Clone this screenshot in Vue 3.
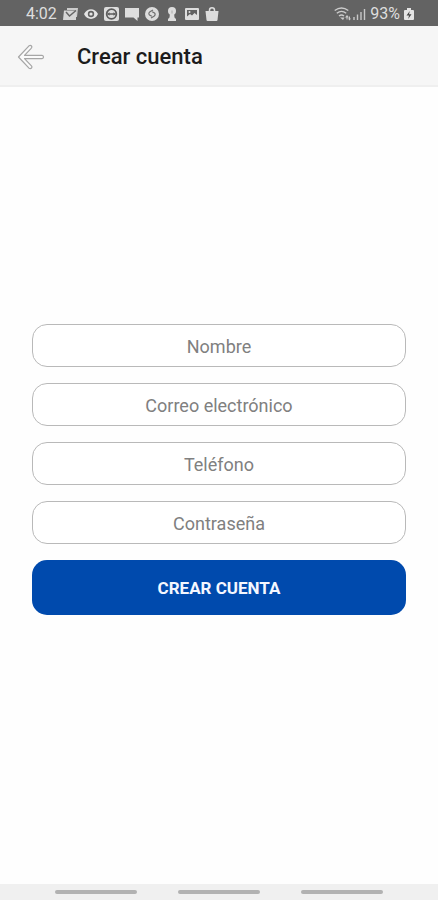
<template>
  <div class="screen">
    <!-- barra de estado -->
    <div class="status-bar">
      <span class="time">4:02</span>
      <div class="status-icons">
        <svg width="15" height="14" viewBox="0 0 15 14">
          <path d="M4 1h11l-1 9h-1V3H4z" fill="#ccc" />
          <path d="M1 3.500h12V13H0z" fill="#d6d6d6" />
          <path d="M3 5l3.500 4L13 3.500" fill="none" stroke="#666" stroke-width="1.500" />
        </svg>
        <svg width="14" height="14" viewBox="0 0 14 14">
          <path d="M0 7C3 0.500 11 0.500 14 7C11 13.500 3 13.500 0 7z" fill="#e4e4e4" />
          <circle cx="7" cy="7" r="3.200" fill="#626262" />
          <circle cx="7" cy="7" r="1.600" fill="#e4e4e4" />
        </svg>
        <svg width="15" height="14" viewBox="0 0 15 14">
          <rect x="0" y="0" width="15" height="14" rx="2" fill="#ddd" />
          <circle cx="7.500" cy="7" r="4.800" fill="none" stroke="#5c5c5c" stroke-width="1.800" />
          <path d="M3 7l2.500-1.800v1h4v-1L12 7 9.500 8.800v-1h-4v1z" fill="#5c5c5c" />
        </svg>
        <svg width="14" height="14" viewBox="0 0 14 14">
          <path d="M0 1h14v9.500h-1.500V14L8.500 10.500H0z" fill="#ddd" />
        </svg>
        <svg width="14" height="14" viewBox="0 0 14 14">
          <circle cx="7" cy="7" r="7" fill="#ddd" />
          <path d="M8 3L5 4.800Q3 6.300 4.500 8L6.800 9.300M6 11L9 9.200Q11 7.700 9.500 6L7.200 4.700" fill="none" stroke="#707070" stroke-width="1.200" />
        </svg>
        <svg width="14" height="14" viewBox="0 0 14 14">
          <circle cx="7" cy="4" r="4" fill="#ddd" />
          <path d="M5 6h4l0.500 4.500L11 12v2H3v-2l1.500-1.500z" fill="#ddd" />
          <path d="M7 3.500v3" stroke="#aaa" />
        </svg>
        <svg width="14" height="14" viewBox="0 0 14 14">
          <rect x="0" y="1" width="14" height="12" rx="1" fill="#ddd" />
          <path d="M2 3h10v5L9.500 6 7 8.500 5 7 2 9.500z" fill="#606060" />
          <circle cx="4.500" cy="4.900" r="1" fill="#ddd" />
        </svg>
        <svg width="14" height="14" viewBox="0 0 14 14">
          <path d="M0.500 4h13L12.500 13Q12.400 14 11.500 14h-9Q1.600 14 1.500 13z" fill="#ddd" />
          <path d="M4.500 5V3.300Q4.500 0.800 7 0.800T9.500 3.300V5" fill="none" stroke="#ddd" stroke-width="1.500" />
        </svg>
      </div>
      <div class="status-right">
        <svg width="18" height="14" viewBox="0 0 18 14">
          <g fill="none" stroke="#ccc" stroke-width="1.400">
            <path d="M0.700 3.500Q7.500-1.500 14.300 3.500" />
            <path d="M2.800 6.300Q7.500 2.500 12.200 6.300" />
            <path d="M5 9Q7.500 7 10 9" />
          </g>
          <path d="M6 10.500h4.500L9 13z" fill="#ccc" />
          <path d="M13 8l2 2.500h-1.500v2h-1v-2H11zM15.500 13.500l-1.500-2h1V9.500h1v2h1z" fill="#ccc" />
        </svg>
        <svg width="14" height="14" viewBox="0 0 14 14">
          <path d="M2 10v3M5.500 7.500v5.500M9 5v8M12.500 2v11" stroke="#c8c8c8" stroke-width="1.400" />
        </svg>
        <span class="percent">93%</span>
        <svg width="10" height="14" viewBox="0 0 10 14">
          <path d="M1 3h2V1h4v2h2q1 0 1 1v8q0 1-1 1H1q-1 0-1-1V4q0-1 1-1z" fill="#e4e4e4" />
          <path d="M5.800 4L2.500 8.500H5L4.200 12 7.500 7.300H5z" fill="#444" />
        </svg>
      </div>
    </div>

    <!-- cabecera -->
    <header class="header">
      <button class="back" type="button" aria-label="Volver">
        <svg width="28" height="26" viewBox="0 0 28 26">
          <path
            d="M1.500 13L12 1.800Q13.500 0.800 14.500 2T14.200 4.300L7.500 11.300H25Q26.500 11.500 26.500 13T25 14.700H7.500L14.200 21.700Q15.500 23 14.500 24T12 24.200z"
            fill="#fafafa"
            stroke="#a6a6a6"
            stroke-width="1.200"
            stroke-linejoin="round"
          />
        </svg>
      </button>
      <h1>Crear cuenta</h1>
    </header>

    <!-- formulario -->
    <main class="content">
      <form class="form" @submit.prevent>
        <input
          v-for="field in fields"
          :key="field.name"
          v-model="form[field.name]"
          :type="field.type"
          :name="field.name"
          :placeholder="field.label"
          :aria-label="field.label"
        />
        <button class="submit" type="submit">CREAR CUENTA</button>
      </form>
    </main>

    <!-- barra de navegación -->
    <div class="nav-bar">
      <span v-for="n in 3" :key="n" class="pill"></span>
    </div>
  </div>
</template>

<script setup>
import { reactive } from 'vue';

// campos del formulario
const fields = [
  { name: 'nombre', label: 'Nombre', type: 'text' },
  { name: 'correo', label: 'Correo electrónico', type: 'email' },
  { name: 'telefono', label: 'Teléfono', type: 'tel' },
  { name: 'contrasena', label: 'Contraseña', type: 'password' },
];

const form = reactive({
  nombre: '',
  correo: '',
  telefono: '',
  contrasena: '',
});
</script>

<style>
body {
  margin: 0;
  background: #fefefe;
}
</style>

<style scoped>
.screen {
  display: flex;
  flex-direction: column;
  min-height: 100vh;
  font-family: Roboto, sans-serif;
}

.status-bar {
  display: flex;
  align-items: center;
  box-sizing: border-box;
  height: 26px;
  padding: 2px 24px 0 26px;
  background: #636363;
  color: #dedede;
  font-size: 16px;
  line-height: 24px;
}

.status-bar svg {
  display: block;
}

.status-icons {
  display: flex;
  gap: 6px;
  margin-left: 6px;
}

.status-right {
  display: flex;
  align-items: center;
  margin-left: auto;
}

.percent {
  margin: 0 4px;
}

.header {
  display: flex;
  align-items: center;
  box-sizing: border-box;
  height: 61px;
  padding: 2px 17px 0;
  gap: 32px;
  background: #f6f6f6;
  border-bottom: 2px solid #efefef;
}

.back {
  padding: 0;
  border: none;
  background: none;
  cursor: pointer;
}

.back svg {
  display: block;
}

.header h1 {
  margin: 0;
  color: #1c1c1c;
  font-size: 22px;
  font-weight: 500;
  line-height: 28px;
}

.content {
  display: flex;
  flex: 1;
  flex-direction: column;
  justify-content: center;
  padding: 0 32px 32px;
}

.form {
  display: flex;
  flex-direction: column;
  gap: 16px;
}

.form input {
  box-sizing: border-box;
  width: 100%;
  height: 43px;
  padding: 1px 16px 0;
  border: 1px solid #b9b9b9;
  border-radius: 15px;
  background: #fff;
  color: #333;
  font-family: inherit;
  font-size: 18px;
  text-align: center;
  outline: none;
}

.form input::placeholder {
  color: #808080;
  opacity: 1;
}

.form input:focus {
  border-color: #004aad;
}

.submit {
  height: 55px;
  border: none;
  border-radius: 15px;
  background: #004aad;
  color: #f4f7ff;
  font-family: inherit;
  font-size: 17px;
  font-weight: 700;
  cursor: pointer;
}

.nav-bar {
  display: flex;
  align-items: center;
  justify-content: center;
  gap: 41px;
  height: 16px;
  background: #f0f0f0;
}

.pill {
  width: 82px;
  height: 4px;
  border-radius: 2px;
  background: #b2b2b2;
}
</style>
